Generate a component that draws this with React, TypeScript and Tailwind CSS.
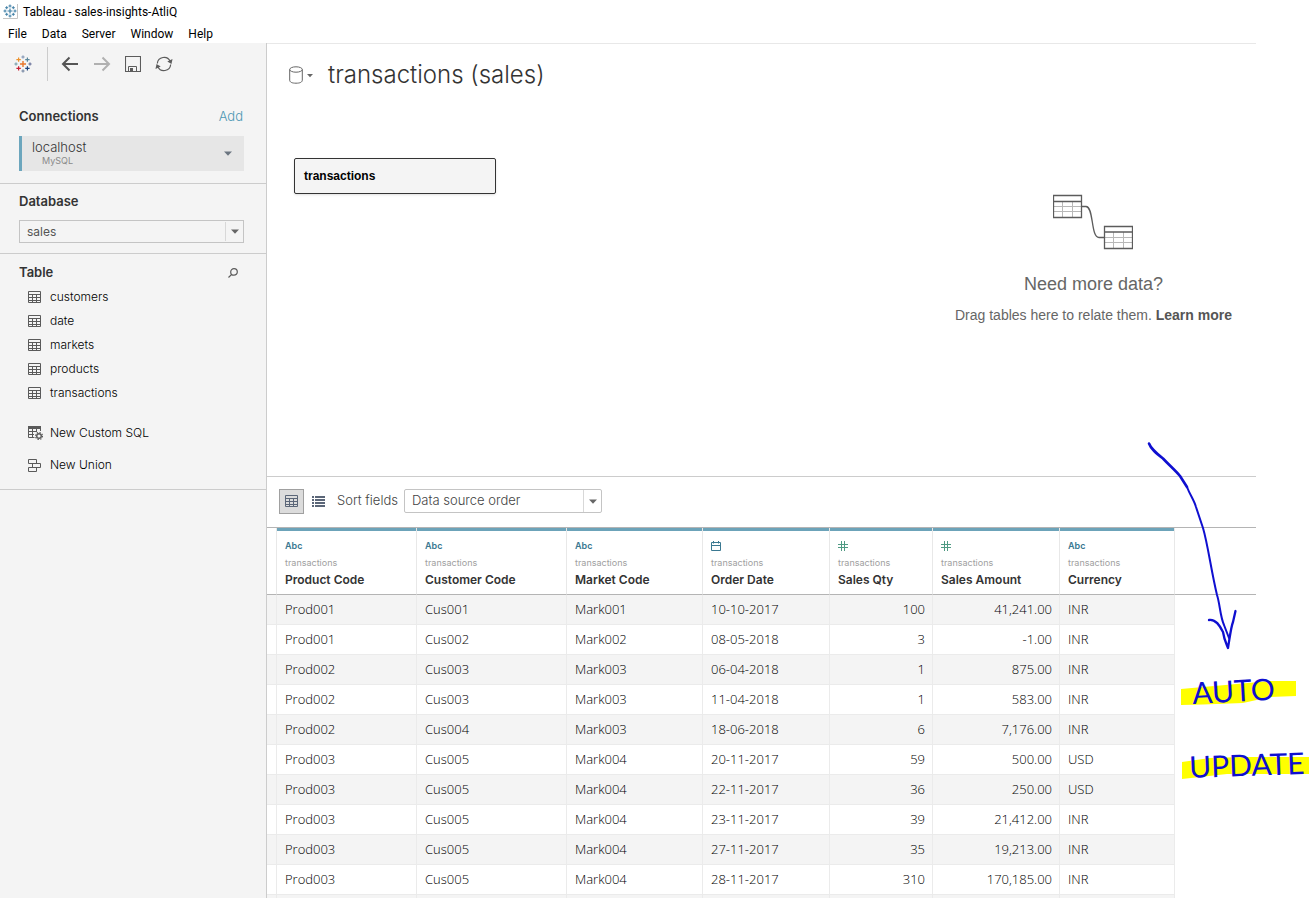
import type { ReactNode } from "react";

const TABLES = ["customers", "date", "markets", "products", "transactions"];

type Kind = "text" | "date" | "number";

const COLUMNS: { label: string; kind: Kind; width: string }[] = [
  { label: "Product Code", kind: "text", width: "w-[140px]" },
  { label: "Customer Code", kind: "text", width: "w-[150px]" },
  { label: "Market Code", kind: "text", width: "w-[136px]" },
  { label: "Order Date", kind: "date", width: "w-[127px]" },
  { label: "Sales Qty", kind: "number", width: "w-[103px]" },
  { label: "Sales Amount", kind: "number", width: "w-[127px]" },
  { label: "Currency", kind: "text", width: "w-[115px]" },
];

const ROWS = [
  ["Prod001", "Cus001", "Mark001", "10-10-2017", "100", "41,241.00", "INR"],
  ["Prod001", "Cus002", "Mark002", "08-05-2018", "3", "-1.00", "INR"],
  ["Prod002", "Cus003", "Mark003", "06-04-2018", "1", "875.00", "INR"],
  ["Prod002", "Cus003", "Mark003", "11-04-2018", "1", "583.00", "INR"],
  ["Prod002", "Cus004", "Mark003", "18-06-2018", "6", "7,176.00", "INR"],
  ["Prod003", "Cus005", "Mark004", "20-11-2017", "59", "500.00", "USD"],
  ["Prod003", "Cus005", "Mark004", "22-11-2017", "36", "250.00", "USD"],
  ["Prod003", "Cus005", "Mark004", "23-11-2017", "39", "21,412.00", "INR"],
  ["Prod003", "Cus005", "Mark004", "27-11-2017", "35", "19,213.00", "INR"],
  ["Prod003", "Cus005", "Mark004", "28-11-2017", "310", "170,185.00", "INR"],
  ["", "", "", "", "", "", ""],
];

function plus(cx: number, cy: number, r: number) {
  return `M${cx - r} ${cy}H${cx + r}M${cx} ${cy - r}V${cy + r}`;
}

function AppIcon() {
  return (
    <svg width="15" height="15" viewBox="0 0 15 15" fill="none" stroke="#3f7fa6" aria-hidden="true">
      <path d="M14.5 0V14.5H0" stroke="#c4c4c4" />
      <path d={plus(7, 7, 2.5)} strokeWidth="1.2" />
      <path
        d={plus(7, 2, 1.5) + plus(7, 12, 1.5) + plus(2, 7, 1.5) + plus(12, 7, 1.5)}
        strokeWidth="1"
      />
      <path
        d={plus(3.7, 3.7, 1.5) + plus(10.3, 3.7, 1.5) + plus(3.7, 10.3, 1.5) + plus(10.3, 10.3, 1.5)}
        strokeWidth="1"
      />
    </svg>
  );
}

function TableauLogo() {
  return (
    <svg width="18" height="18" viewBox="0 0 18 18" fill="none" aria-hidden="true">
      <path d={plus(9, 9, 3)} stroke="#e8762b" strokeWidth="1.4" />
      <path d={plus(9, 2, 1.6)} stroke="#7a8fb0" strokeWidth="1" />
      <path d={plus(9, 16, 1.6)} stroke="#6d7f9c" strokeWidth="1" />
      <path d={plus(2, 9, 1.6)} stroke="#7199a6" strokeWidth="1" />
      <path d={plus(16, 9, 1.6)} stroke="#5b6591" strokeWidth="1" />
      <path d={plus(4.6, 4.6, 2.2)} stroke="#eb912c" strokeWidth="1.2" />
      <path d={plus(13.4, 4.6, 2.2)} stroke="#5b879b" strokeWidth="1.2" />
      <path d={plus(4.6, 13.4, 2.2)} stroke="#c72035" strokeWidth="1.2" />
      <path d={plus(13.4, 13.4, 2.2)} stroke="#1f447e" strokeWidth="1.2" />
    </svg>
  );
}

function ArrowIcon({ forward = false }: { forward?: boolean }) {
  return (
    <svg width="18" height="16" viewBox="0 0 18 16" fill="none" strokeWidth="2" stroke={forward ? "#b0b0b0" : "#555555"} aria-hidden="true">
      <path d={forward ? "M1 8H16M9.500 1.500L16 8L9.500 14.500" : "M17 8H2M8.500 1.500L2 8L8.500 14.500"} />
    </svg>
  );
}

function SaveIcon() {
  return (
    <svg width="16" height="16" viewBox="0 0 16 16" fill="none" stroke="#5c5c5c" aria-hidden="true">
      <path d="M0.500 0.500H15.500V15.500H0.500Z" strokeWidth="1.1" />
      <path d="M3.500 15.500V10.500H11.500V15.500" />
      <path d="M5 12H8V15.500H5Z" fill="#5c5c5c" stroke="none" />
    </svg>
  );
}

function RefreshIcon() {
  return (
    <svg width="18" height="16" viewBox="0 0 18 16" fill="none" stroke="#5c5c5c" strokeWidth="1.200" aria-hidden="true">
      <path d="M2.300 7.500A6.800 6.800 0 0 1 15.200 5.300" />
      <path d="M15.700 8.500A6.800 6.800 0 0 1 2.800 10.700" />
      <path d="M17.500 3L16.500 8L12.300 5.600Z" fill="#5c5c5c" stroke="none" />
      <path d="M0.500 13L1.500 8L5.700 10.400Z" fill="#5c5c5c" stroke="none" />
    </svg>
  );
}

function Caret({ className }: { className: string }) {
  return (
    <svg width="8" height="5" viewBox="0 0 8 5" className={className} aria-hidden="true">
      <path d="M0 0.500H8L4 4.700Z" fill="currentColor" />
    </svg>
  );
}

function GridIcon({ stroke = "#5a5a5a" }: { stroke?: string }) {
  return (
    <svg width="13" height="12" viewBox="0 0 13 12" fill="none" stroke={stroke} aria-hidden="true">
      <path d="M0.500 0.500H12.500V11.500H0.500ZM0 3.500H13M0 6.500H13M0 9.500H13M4.500 3V12M8.500 3V12" />
    </svg>
  );
}

function SqlIcon() {
  return (
    <svg width="15" height="14" viewBox="0 0 15 14" fill="none" stroke="#5a5a5a" aria-hidden="true">
      <path d="M0 0H13V3H0Z" fill="#5a5a5a" stroke="none" />
      <path d="M0.500 0V11.500H6.500M0 5.500H8M0 8.500H6M4.500 3V12M8.500 3V6M12.500 3V5" />
      <circle cx="11" cy="10" r="2.300" strokeWidth="1.400" />
      <circle cx="11" cy="10" r="3.500" strokeWidth="1.100" strokeDasharray="1.400 1.350" />
    </svg>
  );
}

function UnionIcon() {
  return (
    <svg width="13" height="13" viewBox="0 0 13 13" fill="none" stroke="#5a5a5a" aria-hidden="true">
      <path d="M0.500 0.500H8.500V4.500H0.500ZM4.500 4.500H12.500V8.500H4.500ZM0.500 8.500H8.500V12.500H0.500Z" />
    </svg>
  );
}

function SearchIcon() {
  return (
    <svg width="10" height="10" viewBox="0 0 10 10" fill="none" stroke="#5a5a5a" strokeWidth="1.200" aria-hidden="true">
      <circle cx="6" cy="3.900" r="3.300" />
      <path d="M3.700 6.300L0.500 9.500" />
    </svg>
  );
}

function ListIcon() {
  return (
    <svg width="13" height="11" viewBox="0 0 13 11" fill="#5b6678" aria-hidden="true">
      <path d="M0 0H2V2H0ZM3 0H13V2H3ZM0 3H2V5H0ZM3 3H13V5H3ZM0 6H2V8H0ZM3 6H13V8H3ZM0 9H2V11H0ZM3 9H13V11H3Z" />
    </svg>
  );
}

function CylinderIcon() {
  return (
    <svg width="14" height="18" viewBox="0 0 14 18" fill="none" stroke="#666666" aria-hidden="true">
      <ellipse cx="7" cy="3.500" rx="6.300" ry="2.700" />
      <path d="M0.700 3.500V14C0.700 16.200 3 17.200 7 17.200S13.300 16.200 13.300 14V3.500" />
    </svg>
  );
}

function CalendarIcon() {
  return (
    <svg width="10" height="10" viewBox="0 0 10 10" fill="none" stroke="#3a7891" aria-hidden="true">
      <path d="M0.500 1.500H9.500V9.500H0.500ZM0.500 4.500H9.500M2.500 0V2.500M7.500 0V2.500" />
    </svg>
  );
}

function HashIcon() {
  return (
    <svg width="10" height="10" viewBox="0 0 10 10" fill="none" stroke="#4f9a83" aria-hidden="true">
      <path d="M0 3.500H10M0 6.500H10M3.500 0V10M6.500 0V10" />
    </svg>
  );
}

function RelateIcon() {
  return (
    <svg width="80" height="56" viewBox="1 0 80 56" fill="none" aria-hidden="true">
      <g stroke="#b8b8b8">
        <path d="M1 12.500H30M1 17.500H30M10.500 7V23M20.500 7V23" />
        <path d="M52 43.500H81M52 48.500H81M61.500 38V54M71.500 38V54" />
      </g>
      <g stroke="#5c5c5c" strokeWidth="1.300">
        <path d="M1.500 1.500H29.500V23.500H1.500ZM1 7.500H30" />
        <path d="M52.500 32.500H80.500V54.500H52.500ZM52 38H81" />
        <path d="M30 12.500H34C42 12.500 38.500 43.500 47 43.500H52" />
      </g>
    </svg>
  );
}

function KindMark({ kind }: { kind: Kind }) {
  if (kind === "date") return <CalendarIcon />;
  if (kind === "number") return <HashIcon />;
  return <span className="text-[9px] font-semibold text-[#3a7891]">Abc</span>;
}

function SidebarItem({ icon, children, tall = false }: { icon: ReactNode; children: ReactNode; tall?: boolean }) {
  return (
    <li>
      <button type="button" className={`flex w-full items-center pl-7 text-left ${tall ? "h-8" : "h-6"}`}>
        <span className="flex w-[22px]">{icon}</span>
        {children}
      </button>
    </li>
  );
}

function Sidebar() {
  return (
    <aside className="w-[267px] shrink-0 border-r border-[#cccccc] bg-[#f4f4f4] text-[13px] text-[#333333]">
      <div className="flex h-[42px] items-center pl-3.5" role="toolbar" aria-label="Main">
        <button type="button" aria-label="Start page" className="mr-[15px]">
          <TableauLogo />
        </button>
        <span className="h-[34px] w-px bg-[#cccccc]" />
        <div className="ml-[13px] flex items-center gap-3.5">
          <button type="button" aria-label="Undo"><ArrowIcon /></button>
          <button type="button" aria-label="Redo"><ArrowIcon forward /></button>
          <button type="button" aria-label="Save"><SaveIcon /></button>
          <button type="button" aria-label="Refresh"><RefreshIcon /></button>
        </div>
      </div>

      <section className="border-b border-[#cccccc] px-[19px] pt-[22px] pb-3">
        <div className="flex h-5 items-center justify-between pr-1">
          <h2 className="font-semibold">Connections</h2>
          <button type="button" className="font-light text-[#4c97b3]">Add</button>
        </div>
        <button
          type="button"
          className="mt-[9px] flex h-[35px] w-[225px] items-center justify-between border-l-[3px] border-[#6ca6bd] bg-[#e6e6e6] pr-3 pl-2.5 text-left"
        >
          <span>
            <span className="block leading-[15px] font-light text-[#333333]">localhost</span>
            <span className="block pl-2.5 text-[9px] leading-3 text-[#8a8a8a]">MySQL</span>
          </span>
          <Caret className="text-[#6b7580]" />
        </button>
      </section>

      <section className="border-b border-[#cccccc] px-[19px] pt-[7px] pb-2.5">
        <h2 className="h-5 leading-5 font-semibold">
          <label htmlFor="database">Database</label>
        </h2>
        <div className="relative mt-[9px] flex w-[225px]">
          <select id="database" className="h-[23px] w-full appearance-none border border-[#c4c4c4] bg-[#f4f4f4] pl-[7px] text-[12px] text-[#555555]">
            <option>sales</option>
          </select>
          <span className="pointer-events-none absolute top-0.5 right-px flex h-[19px] w-[18px] items-center justify-center border-l border-[#d8d8d8]">
            <Caret className="text-[#666666]" />
          </span>
        </div>
      </section>

      <section className="border-b border-[#cccccc] pt-[9px] pb-2">
        <div className="flex h-5 items-center justify-between pr-7 pl-[19px]">
          <h2 className="font-semibold">Table</h2>
          <button type="button" aria-label="Search tables"><SearchIcon /></button>
        </div>
        <ul className="mt-0.5 text-[12px] font-light text-black">
          {TABLES.map((name) => (
            <SidebarItem key={name} icon={<GridIcon />}>{name}</SidebarItem>
          ))}
        </ul>
        <ul className="mt-3 text-[12px] font-light text-black">
          <SidebarItem icon={<SqlIcon />} tall>New Custom SQL</SidebarItem>
          <SidebarItem icon={<UnionIcon />} tall>New Union</SidebarItem>
        </ul>
      </section>
    </aside>
  );
}

function Canvas() {
  return (
    <section className="h-[434px] shrink-0 border-y border-t-[#e8e8e8] border-b-[#cccccc] pr-6">
      <div className="flex h-[62px] items-center pl-[22px]">
        <button type="button" aria-label="Data source menu" className="flex items-center gap-1">
          <CylinderIcon />
          <Caret className="w-1.5 text-[#666666]" />
        </button>
        <h1 className="ml-[15px] text-[24px] font-light text-[#333333]">transactions (sales)</h1>
      </div>
      <div className="flex items-start justify-between pt-[52px] pl-[27px]">
        <button
          type="button"
          className="h-9 w-[202px] rounded-xs border border-[#333333] bg-[#f4f4f4] pl-[9px] text-left font-['Liberation_Sans',sans-serif] text-[12px] font-bold text-black shadow-sm"
        >
          transactions
        </button>
        <div className="flex flex-col items-center pt-9 font-['Liberation_Sans',sans-serif] text-[#666666]">
          <RelateIcon />
          <h2 className="mt-[22px] text-[18px] leading-6">Need more data?</h2>
          <p className="mt-[7px] text-[14px] leading-6">
            Drag tables here to relate them.{" "}
            <a href="#learn-more" className="font-bold text-[#555555]">Learn more</a>
          </p>
        </div>
      </div>
    </section>
  );
}

function GridToolbar() {
  return (
    <div className="flex h-[51px] shrink-0 items-center border-b border-[#b4b4b4] pb-0.5 pl-3 text-[13px] text-[#444444]">
      <button type="button" aria-label="Preview data source" aria-pressed="true" className="flex size-[25px] items-center justify-center border border-[#a0a0a0] bg-[#dcdcdc]">
        <GridIcon stroke="#5b6678" />
      </button>
      <button type="button" aria-label="Manage metadata" aria-pressed="false" className="ml-2">
        <ListIcon />
      </button>
      <label htmlFor="sort-fields" className="ml-3 w-[67px] font-light whitespace-nowrap">Sort fields</label>
      <div className="relative flex w-[198px]">
        <select id="sort-fields" className="h-6 w-full appearance-none rounded-xs border border-[#c4c4c4] bg-white pl-[7px] font-light">
          <option>Data source order</option>
        </select>
        <span className="pointer-events-none absolute top-px right-px flex h-[22px] w-[18px] items-center justify-center border-l border-[#d8d8d8]">
          <Caret className="text-[#666666]" />
        </span>
      </div>
    </div>
  );
}

function DataGrid() {
  return (
    <div className="min-h-0 flex-1 overflow-hidden">
      <table className="w-full table-fixed border-separate border-spacing-0 text-[12px] text-[#222222]">
        <colgroup>
          <col className="w-2.5" />
          {COLUMNS.map((c) => (
            <col key={c.label} className={c.width} />
          ))}
          <col />
        </colgroup>
        <thead>
          <tr>
            <td className="border-r border-b border-[#e8e8e8] border-b-[#b4b4b4]" />
            {COLUMNS.map((c) => (
              <th key={c.label} scope="col" className="border-r border-b border-[#e8e8e8] border-b-[#b4b4b4] p-0 text-left font-normal">
                <div className="h-[3px] bg-[#6ca3b9]" />
                <div className="flex h-[63px] flex-col pt-1.5 pl-2">
                  <span className="flex h-[17px] items-center"><KindMark kind={c.kind} /></span>
                  <span className="h-[17px] text-[9px] leading-[17px] text-[#a0a0a0]">transactions</span>
                  <span className="h-[17px] leading-[17px] font-semibold text-[#333333]">{c.label}</span>
                </div>
              </th>
            ))}
            <td className="border-b border-[#b4b4b4]" />
          </tr>
        </thead>
        <tbody className="font-['Open_Sans',sans-serif] text-[13px] font-light text-black">
          {ROWS.map((row, r) => (
            <tr key={r} className="group">
              <td className="h-[30px] border-r border-b border-[#ebebeb] p-0 group-odd:bg-[#f4f4f4]" />
              {row.map((value, c) => (
                <td
                  key={c}
                  className={`h-[30px] border-r border-b border-[#ebebeb] py-0 pr-[7px] pl-2 group-odd:bg-[#f4f4f4] ${
                    COLUMNS[c].kind === "number" ? "text-right" : "text-left"
                  }`}
                >
                  {value}
                </td>
              ))}
              <td />
            </tr>
          ))}
        </tbody>
      </table>
    </div>
  );
}

function InkNote() {
  return (
    <div className="pointer-events-none absolute top-[440px] right-0 w-[162px]">
      <svg width="100" height="212" viewBox="1147 440 100 212" fill="none" stroke="#0f0fd0" strokeLinecap="round" strokeLinejoin="round" aria-hidden="true">
        <path d="M1149 443.500C1151 449 1156 453 1163 458.500C1169 465 1175 470 1180 476L1187 487" strokeWidth="2.600" />
        <path d="M1187 487C1190 495 1194 500 1196 507L1203 528C1208 545 1211 570 1217 595C1220 604 1220 616 1224 625L1229 638" strokeWidth="2" />
        <path d="M1209 620C1216 619 1220 626 1223 632C1224 639 1226 643 1228 648C1230 636 1231 627 1233 622L1235.500 611" strokeWidth="2.300" />
      </svg>
      <div className="relative mt-6 h-[34px]">
        <svg width="116" height="26" viewBox="1181 680 116 26" className="absolute top-1 left-[34px]" aria-hidden="true">
          <path d="M1181 689L1203 687L1270 681H1296V696L1270 697L1243 703L1203 704.500L1181 705Z" fill="#ffff00" />
        </svg>
        <p className="absolute top-0 left-[45px] origin-left -rotate-3 font-[Lato,sans-serif] text-[30px] leading-8 text-[#0f0fd0]">AUTO</p>
      </div>
      <div className="relative mt-9 h-[36px]">
        <svg width="127" height="24" viewBox="1182 756 127 24" className="absolute top-[10px] left-[35px]" aria-hidden="true">
          <path d="M1182 762L1210 758L1243 757H1309V774H1227L1200 777L1182 779Z" fill="#ffff00" />
        </svg>
        <p className="absolute top-1 left-[42px] origin-left -rotate-2 font-[Lato,sans-serif] text-[30px] leading-8 text-[#0f0fd0]">UPDATE</p>
      </div>
    </div>
  );
}

export default function App() {
  return (
    <div className="relative flex h-screen flex-col overflow-hidden bg-white font-[Inter,sans-serif]">
      <header className="shrink-0 font-[Roboto,sans-serif] text-[12px] text-black">
        <div className="flex h-[23px] items-center gap-[5px] pl-[3px]">
          <AppIcon />
          <span>Tableau - sales-insights-AtliQ</span>
        </div>
        <nav className="flex h-5 items-center gap-[15px] pt-0.5 pl-2" aria-label="Menu bar">
          {["File", "Data", "Server", "Window", "Help"].map((item) => (
            <button key={item} type="button">{item}</button>
          ))}
        </nav>
      </header>
      <div className="flex min-h-0 flex-1">
        <Sidebar />
        <main className="mr-[53px] flex min-w-0 flex-1 flex-col">
          <Canvas />
          <GridToolbar />
          <DataGrid />
        </main>
      </div>
      <InkNote />
    </div>
  );
}
